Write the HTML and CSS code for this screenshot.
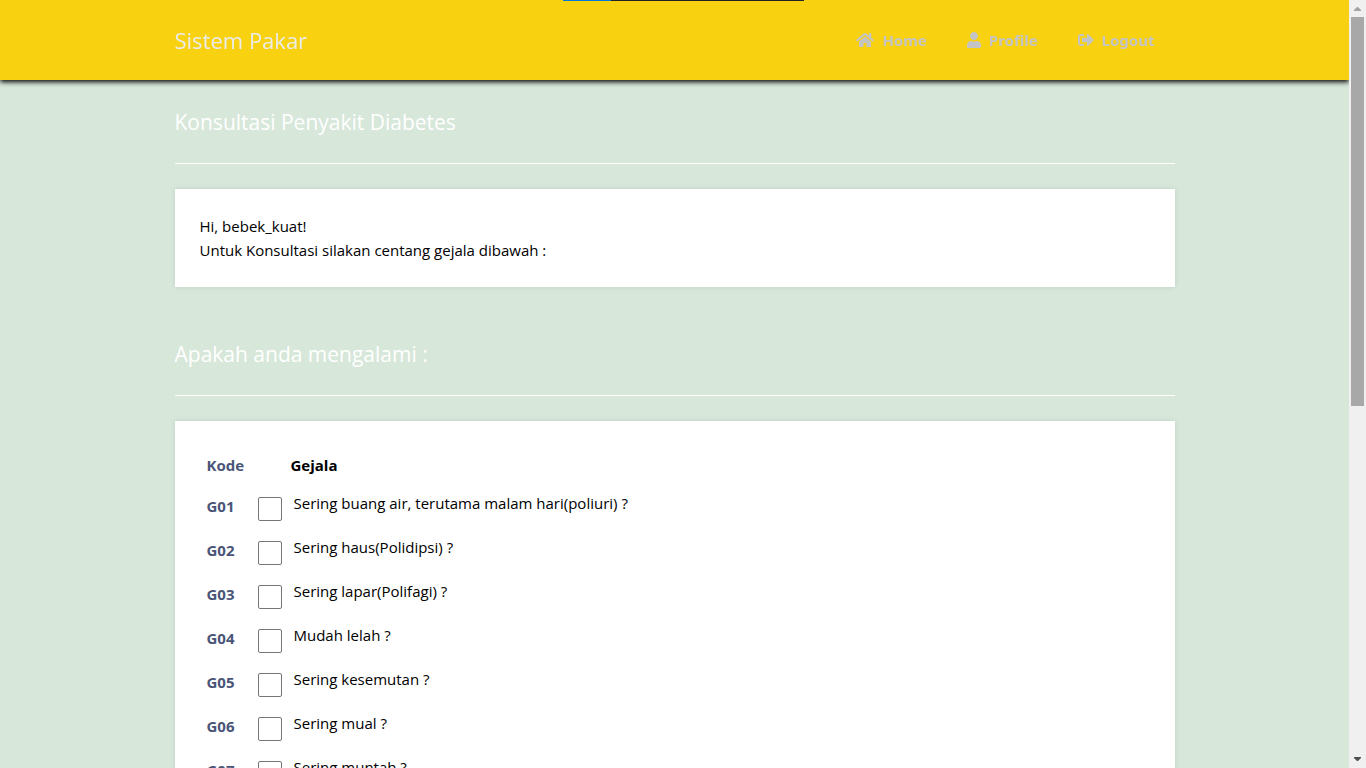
FILE: index.html
```html
<!DOCTYPE html>
<html lang="id">
<head>
<meta charset="utf-8">
<meta name="viewport" content="width=device-width, initial-scale=1">
<title>Sistem Pakar</title>
<link rel="stylesheet" href="styles.css">
</head>
<body>
<div class="window">
  <div class="progress"></div>
  <div class="page">
    <header class="navbar">
      <div class="container navbar-inner">
        <a class="brand" href="#">Sistem Pakar</a>
        <nav class="menu">
          <a class="menu-link" href="#"><svg class="icon icon-home" viewBox="0 0 576 512" aria-hidden="true"><path d="M280.370 148.260L96 300.110V464a16 16 0 0 0 16 16l112.060-.29a16 16 0 0 0 15.920-16V368a16 16 0 0 1 16-16h64a16 16 0 0 1 16 16v95.640a16 16 0 0 0 16 16.050L464 480a16 16 0 0 0 16-16V300L295.670 148.260a12.190 12.190 0 0 0-15.300 0zM571.600 251.470L488 182.560V44.050a12 12 0 0 0-12-12h-56a12 12 0 0 0-12 12v72.610L318.470 43a48 48 0 0 0-61 0L4.340 251.470a12 12 0 0 0-1.600 16.900l25.500 31A12 12 0 0 0 45.150 301l235.220-193.740a12.190 12.190 0 0 1 15.300 0L530.900 301a12 12 0 0 0 16.900-1.600l25.500-31a12 12 0 0 0-1.700-16.930z"/></svg>Home</a>
          <a class="menu-link" href="#"><svg class="icon icon-user" viewBox="0 0 448 512" aria-hidden="true"><path d="M224 256c70.700 0 128-57.300 128-128S294.700 0 224 0 96 57.300 96 128s57.300 128 128 128zm89.600 32h-16.700c-22.200 10.200-46.900 16-72.900 16s-50.600-5.800-72.900-16h-16.700C60.200 288 0 348.200 0 422.400V464c0 26.500 21.500 48 48 48h352c26.500 0 48-21.500 48-48v-41.600c0-74.200-60.200-134.400-134.400-134.400z"/></svg>Profile</a>
          <a class="menu-link" href="#"><svg class="icon icon-logout" viewBox="0 0 512 512" aria-hidden="true"><path d="M497 273L329 441c-15 15-41 4.500-41-17v-96H152c-13.300 0-24-10.700-24-24v-96c0-13.300 10.700-24 24-24h136V88c0-21.400 25.900-32 41-17l168 168c9.300 9.400 9.300 24.600 0 34zM192 436v-40c0-6.600-5.400-12-12-12H96c-17.700 0-32-14.300-32-32V160c0-17.700 14.300-32 32-32h84c6.600 0 12-5.400 12-12V76c0-6.600-5.400-12-12-12H96c-53 0-96 43-96 96v192c0 53 43 96 96 96h84c6.600 0 12-5.400 12-12z"/></svg>Logout</a>
        </nav>
      </div>
    </header>
    <main class="container content">
      <section class="section">
        <h1 class="title">Konsultasi Penyakit Diabetes</h1>
        <div class="card">
          <p class="text">Hi, bebek_kuat!<br>Untuk Konsultasi silakan centang gejala dibawah :</p>
        </div>
      </section>
      <section class="section">
        <h2 class="title">Apakah anda mengalami :</h2>
        <form class="card">
          <table class="symptoms">
            <thead>
              <tr><th class="code" scope="col">Kode</th><th class="symptom-head" scope="col">Gejala</th></tr>
            </thead>
            <tbody>
              <tr><th class="code" scope="row">G01</th><td><label class="symptom"><input class="check" type="checkbox" name="G01">Sering buang air, terutama malam hari(poliuri) ?</label></td></tr>
              <tr><th class="code" scope="row">G02</th><td><label class="symptom"><input class="check" type="checkbox" name="G02">Sering haus(Polidipsi) ?</label></td></tr>
              <tr><th class="code" scope="row">G03</th><td><label class="symptom"><input class="check" type="checkbox" name="G03">Sering lapar(Polifagi) ?</label></td></tr>
              <tr><th class="code" scope="row">G04</th><td><label class="symptom"><input class="check" type="checkbox" name="G04">Mudah lelah ?</label></td></tr>
              <tr><th class="code" scope="row">G05</th><td><label class="symptom"><input class="check" type="checkbox" name="G05">Sering kesemutan ?</label></td></tr>
              <tr><th class="code" scope="row">G06</th><td><label class="symptom"><input class="check" type="checkbox" name="G06">Sering mual ?</label></td></tr>
              <tr><th class="code" scope="row">G07</th><td><label class="symptom"><input class="check" type="checkbox" name="G07">Sering muntah ?</label></td></tr>
            </tbody>
          </table>
        </form>
      </section>
    </main>
  </div>
  <div class="scrollbar" aria-hidden="true">
    <svg class="arrow arrow-up" viewBox="0 0 7 4"><path d="M0 4V3L3 0h1l3 3v1z"/></svg>
    <div class="track"><div class="thumb"></div></div>
    <svg class="arrow" viewBox="0 0 7 4"><path d="M0 0v1l3 3h1l3-3V0z"/></svg>
  </div>
</div>
</body>
</html>
```
FILE: styles.css
```css
* {
  box-sizing: border-box;
}

body {
  margin: 0;
  background: #d7e7da;
  color: #000;
  font-family: "Segoe UI", "Open Sans", "Noto Sans", sans-serif;
  font-size: 15px;
  line-height: 24px;
}

.window {
  position: relative;
  display: flex;
  height: 100vh;
}

.page {
  flex: 1;
  min-width: 0;
  overflow-y: auto;
  scrollbar-width: none;
}

.progress {
  position: absolute;
  top: 0;
  left: 563px;
  z-index: 2;
  width: 241px;
  height: 1px;
  background: linear-gradient(to right, #0078d7 20%, #222 20%);
}

.container {
  max-width: 1000px;
  margin: 0 auto;
}

.navbar {
  position: sticky;
  top: 0;
  z-index: 1;
  background: #f8d210;
  box-shadow: 0 2px 5px #000;
}

.navbar-inner {
  display: flex;
  align-items: center;
  justify-content: space-between;
  min-height: 80px;
}

.brand {
  color: #ebebeb;
  font-size: 22px;
  line-height: 36px;
  text-decoration: none;
}

.menu {
  display: flex;
}

.menu-link {
  display: flex;
  align-items: center;
  gap: 8px;
  padding: 0 20px;
  color: #c4c4c4;
  font-family: "Segoe UI", "Noto Sans", sans-serif;
  font-weight: 700;
  text-decoration: none;
}

.icon {
  height: 16px;
  fill: currentColor;
}

.icon-home {
  width: 18px;
}

.icon-user {
  width: 14px;
}

.icon-logout {
  width: 16px;
}

.section {
  padding: 24px 0 25px;
}

.title {
  margin: 0 0 25px;
  padding-bottom: 23px;
  border-bottom: 1px solid #fff;
  color: #fff;
  font-size: 21px;
  font-weight: 400;
  line-height: 36px;
}

.card {
  padding: 25px;
  background: #fff;
  box-shadow: 0 0 5px rgba(0, 0, 0, 0.1);
}

.text {
  margin: 0;
}

.symptoms {
  width: 100%;
  border-collapse: collapse;
  text-align: left;
}

.symptoms th,
.symptoms td {
  padding: 7px 0;
}

.symptoms .code {
  width: 58px;
  padding-left: 7px;
  color: #4a5578;
}

.symptoms .symptom-head {
  padding-left: 33px;
}

.symptom {
  display: flex;
  align-items: flex-start;
  gap: 12px;
}

.check {
  appearance: none;
  width: 24px;
  height: 24px;
  margin: 6px 0 0;
  border: 1px solid #767676;
  border-radius: 2px;
  background: #fff;
}

.check:checked {
  background: #0078d7;
}

.scrollbar {
  display: flex;
  flex-direction: column;
  align-items: center;
  width: 17px;
  padding: 7px 0;
  background: #f0f0f0;
}

.arrow {
  width: 7px;
  height: 4px;
  fill: #505050;
}

.arrow-up {
  fill: #a3a3a3;
}

.track {
  flex: 1;
  width: 13px;
  margin: 6px 0;
}

.thumb {
  height: 53%;
  background: #a8a8a8;
}
```
